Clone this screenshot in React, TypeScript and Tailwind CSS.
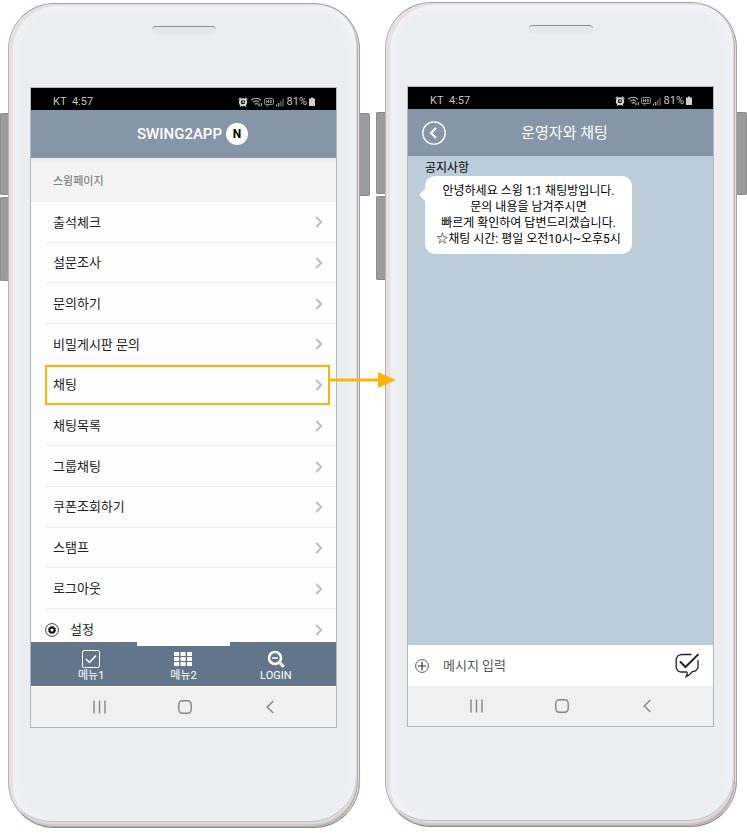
import React from "react";

const KR = "font-['Roboto','Noto_Sans_CJK_KR',sans-serif]";

const MENU = [
  "출석체크",
  "설문조사",
  "문의하기",
  "비밀게시판 문의",
  "채팅",
  "채팅목록",
  "그룹채팅",
  "쿠폰조회하기",
  "스탬프",
  "로그아웃",
];

function Chevron() {
  return (
    <svg width="8" height="12" viewBox="0 0 8 12" fill="none" stroke="#bcbcbc" strokeWidth="1.9">
      <path d="M1.2 1l5 5-5 5" />
    </svg>
  );
}

function StatusBar() {
  return (
    <div className="flex h-[22px] items-center justify-between bg-black pt-1.5 pr-[21px] pl-[22px] text-[11px] leading-4 text-[#c6c6c6]">
      <span>KT&nbsp; 4:57</span>
      <span className="flex items-center">
        <svg className="mr-[3px]" width="46" height="10" viewBox="0 0 46 10" fill="none">
          <circle cx="5" cy="5.2" r="3.1" stroke="#d8d8d8" strokeWidth="1.9" />
          <path d="M.6 2.6L2.8.7M9.4 2.6L7.2.7M2 9.6l1.2-1.2M8 9.600L6.800 8.400M5 3.600v1.800h1.400" stroke="#d8d8d8" strokeWidth="1.1" />
          <path d="M13 3.400c3-2.800 7-2.800 10 0M14.900 5.400c1.900-1.700 4.400-1.700 6.200 0M16.700 7.300c.9-.8 2.100-.8 3 0" stroke="#b5b5b5" strokeWidth="1.2" />
          <path d="M21 6.500v3M23.300 6v3" stroke="#b5b5b5" strokeWidth="1.1" />
          <rect x="26.500" y="1.500" width="9" height="6" rx="1.500" stroke="#8c8c8c" />
          <path d="M28.600 2.800v3.400M30.500 2.800v3.400M28.600 4.500h1.900M32.200 3v3h.8l.8-.8V3.800L33 3z" stroke="#b0b0b0" strokeWidth=".8" />
          <path d="M28 9h3" stroke="#8c8c8c" strokeWidth=".8" />
          <path d="M38.500 9.500V7.500M40.700 9.500V6" stroke="#b5b5b5" strokeWidth="1.200" />
          <path d="M42.800 9.500V4M45 9.500V1.500" stroke="#6e6e6e" strokeWidth="1.200" />
        </svg>
        81%
        <svg className="ml-0.5" width="6" height="10" viewBox="0 0 6 10" fill="#d0d0d0">
          <path d="M2 .5h2v1h2V9H0V1.500h2z" />
        </svg>
      </span>
    </div>
  );
}

function SystemNav() {
  return (
    <div className="grid h-10 grid-cols-3 place-items-center bg-[#f0f0f0] pr-6 pl-[26px]">
      <button type="button" aria-label="최근 앱">
        <svg width="14" height="14" viewBox="0 0 14 14" stroke="#858585" strokeWidth="1.400">
          <path d="M1 .5v13M6.500.5v13M12 .5v13" />
        </svg>
      </button>
      <button type="button" aria-label="홈">
        <svg width="14" height="14" viewBox="0 0 14 14" fill="none" stroke="#858585" strokeWidth="1.400">
          <rect x=".8" y=".8" width="12.400" height="12.400" rx="3.600" />
        </svg>
      </button>
      <button type="button" aria-label="뒤로">
        <svg width="8" height="14" viewBox="0 0 8 14" fill="none" stroke="#858585" strokeWidth="1.400">
          <path d="M7.300 1L1.200 7l6.100 6" />
        </svg>
      </button>
    </div>
  );
}

function SideButton({ side }: { side: "left" | "right" }) {
  return (
    <div
      className={
        side === "left"
          ? "rounded-l-xs border border-r-0 border-[#8c8c8c] bg-[#9b9b9b]"
          : "h-[83px] rounded-r-xs border border-l-0 border-[#8c8c8c] bg-[#9b9b9b]"
      }
    />
  );
}

function Phone({ first, children }: { first?: boolean; children: React.ReactNode }) {
  return (
    <div className={first ? "flex pt-[3px]" : "flex pt-[2px]"}>
      <div
        className={
          first
            ? "grid w-2 grid-rows-[82px_84px] content-start gap-y-0.5 pt-[110px]"
            : "grid w-[9px] grid-rows-[82px_84px] content-start gap-y-0.5 pt-[110px]"
        }
      >
        <SideButton side="left" />
        <SideButton side="left" />
      </div>
      <div className="min-w-0 flex-1 rounded-[46px] border border-t-[#a3a1a2] border-r-[#a3a1a2] border-b-[#8f8b8b] border-l-[#b5b0b0] bg-[#ecedf1] pr-[22px] pb-[99px] pl-[21px] shadow-[inset_-1px_0_0_#e8e0e1,inset_-2px_-1px_0_#b3adae,inset_-2px_-3px_0_#d0c9ca,inset_4px_2px_0_#e8e0e1,inset_-3px_-5px_0_#e2dadb,inset_-3px_-6px_0_#c4bfc0,inset_0_0_12px_4px_#f5f6f8]">
        <div className="flex h-[83px] justify-center pt-[22px]">
          <div className="h-2 w-16 rounded-full border-t border-[#8f8f8f] bg-[#e6e7e8]" />
        </div>
        <div className="flex flex-col border border-[#b4b6ba]">{children}</div>
      </div>
      <div className="w-2.5 pt-[110px]">
        <SideButton side="right" />
      </div>
    </div>
  );
}

function Tab({ label, active, children }: { label: string; active?: boolean; children: React.ReactNode }) {
  return (
    <button
      type="button"
      className={
        active
          ? "flex flex-col items-center border-t-4 border-white pt-1 text-[11px] leading-4 text-white"
          : "flex flex-col items-center pt-2 text-[11px] leading-4 text-white"
      }
    >
      <span className="flex h-[18px] items-center">{children}</span>
      {label}
    </button>
  );
}

function MenuScreen() {
  return (
    <>
      <StatusBar />
      <header className="flex h-12 items-center justify-center gap-1 bg-[#8695a7] pb-px pl-[18px] text-white">
        <h1 className="text-[15px] leading-5 font-medium">SWING2APP</h1>
        <span className="flex size-[22px] items-center justify-center rounded-full bg-white text-xs font-bold text-black">N</span>
      </header>
      <h2 className="mt-[3px] flex h-[41px] items-center bg-[#f3f3f3] pt-px pl-[22px] text-[11px] text-[#6b6b6b]">스윙페이지</h2>
      <ul className="grid h-[407px] auto-rows-fr bg-[#fdfdfd] text-[13px] text-[#222]">
        {MENU.map((name) => (
          <li key={name} className="relative ml-3.5 border-b border-[#f0f0f0]">
            <a href="#" className="flex h-full items-center justify-between pt-px pr-[13px] pl-2">
              {name}
              <Chevron />
            </a>
            {name === "채팅" && (
              <>
                <span className="pointer-events-none absolute inset-y-0 right-1.5 left-0 border-2 border-[#fdb50b]" />
                <svg className="pointer-events-none absolute top-[7px] left-[284px] z-10" width="67" height="16" viewBox="0 0 67 16" fill="#fdb50b">
                  <path d="M0 6.500h49V0l18 8-18 8V9.500H0z" />
                </svg>
              </>
            )}
          </li>
        ))}
      </ul>
      <a href="#" className="flex h-[33px] items-center justify-between bg-[#fdfdfd] pt-2 pr-[13px] pl-3.5 text-[13px] text-[#222]">
        <span className="flex items-center gap-[11px]">
          <svg width="14" height="14" viewBox="0 0 14 14" fill="none" stroke="#111">
            <circle cx="7" cy="7" r="6.400" strokeWidth=".8" />
            <circle cx="7" cy="7" r="2.500" strokeWidth="2" />
            <circle cx="7" cy="7" r="3.500" strokeWidth="1" strokeDasharray="1.400 1.350" />
          </svg>
          설정
        </span>
        <Chevron />
      </a>
      <nav className="grid h-11 grid-cols-3 bg-[#62758b] px-3.5">
        <Tab label="메뉴1">
          <svg width="18" height="18" viewBox="0 0 18 18" fill="none" stroke="#fff">
            <rect x=".5" y=".5" width="17" height="17" rx="1.500" />
            <path d="M4 9l3.500 3.500L14 5.500" strokeWidth="1.500" />
          </svg>
        </Tab>
        <Tab label="메뉴2" active>
          <svg width="18" height="14" viewBox="0 0 18 14" fill="#fff">
            {[0, 5, 10].map((y) =>
              [0, 6.5, 13].map((x) => <rect key={`${x}-${y}`} x={x} y={y} width="5.200" height="4" rx=".8" />),
            )}
          </svg>
        </Tab>
        <Tab label="LOGIN">
          <svg width="18" height="18" viewBox="0 0 18 18" fill="none" stroke="#fff">
            <circle cx="8" cy="8" r="6" strokeWidth="2.500" />
            <path d="M12.200 12.200l4.600 4.600" strokeWidth="3" />
            <path d="M5 8h6" strokeWidth="1.500" />
          </svg>
        </Tab>
      </nav>
      <div className="border-t border-white">
        <SystemNav />
      </div>
    </>
  );
}

function ChatScreen() {
  return (
    <>
      <StatusBar />
      <header className="grid h-[47px] grid-cols-[24px_1fr_24px] items-center bg-[#8695a7] px-3.5 text-white">
        <button type="button" aria-label="뒤로 가기">
          <svg width="24" height="24" viewBox="0 0 24 24" fill="none" stroke="#fff">
            <circle cx="12" cy="12" r="11.200" strokeWidth="1.300" />
            <path d="M14 7l-5 5 5 5" strokeWidth="2" />
          </svg>
        </button>
        <h1 className="pl-2 text-center text-[15px] leading-5">운영자와 채팅</h1>
      </header>
      <main className="h-[489px] bg-[#bdccd9] pt-1 pl-[17px] text-black">
        <p className="pt-px text-[12px] leading-[15px]">공지사항</p>
        <div className="relative w-[207px] rounded-[10px] bg-white py-[7px] text-center text-[12px] leading-4">
          <svg className="absolute top-3 -left-1.5" width="7" height="14" viewBox="0 0 7 14" fill="#fff">
            <path d="M7 0v14L0 7z" />
          </svg>
          <p>안녕하세요 스윙 1:1 채팅방입니다.</p>
          <p>문의 내용을 남겨주시면</p>
          <p>빠르게 확인하여 답변드리겠습니다.</p>
          <p>☆채팅 시간: 평일 오전10시~오후5시</p>
        </div>
      </main>
      <form className="flex h-[41px] items-center bg-white pr-3.5 pl-[7px]" onSubmit={(e) => e.preventDefault()}>
        <button type="button" aria-label="첨부">
          <svg width="14" height="14" viewBox="0 0 14 14" fill="none" stroke="#333">
            <circle cx="7" cy="7" r="6.400" strokeWidth=".8" />
            <path d="M7 2.800v8.400M2.800 7h8.400" strokeWidth="1.200" />
          </svg>
        </button>
        <input
          aria-label="메시지 입력"
          placeholder="메시지 입력"
          className="ml-3.5 min-w-0 flex-1 text-[13px] leading-5 outline-none placeholder:text-[#555]"
        />
        <button type="submit" aria-label="보내기">
          <svg width="24" height="25" viewBox="0 0 24 25" fill="none" stroke="#222">
            <path d="M16.500 1.500H6.500L3 2.700 1.200 6v9L3 18l3 1h5.500l1 1.500-1.500 3 3-1.500 3.500-3.500L20.500 18l2.500-3V7" strokeWidth="1.300" />
            <path d="M5 8.500l5.500 5.500L23.500 1.200" strokeWidth="2" />
          </svg>
        </button>
      </form>
      <SystemNav />
    </>
  );
}

export default function App() {
  return (
    <div className={`grid min-h-screen grid-cols-[370fr_371fr] items-start gap-1.5 bg-white ${KR}`}>
      <Phone first>
        <MenuScreen />
      </Phone>
      <Phone>
        <ChatScreen />
      </Phone>
    </div>
  );
}
